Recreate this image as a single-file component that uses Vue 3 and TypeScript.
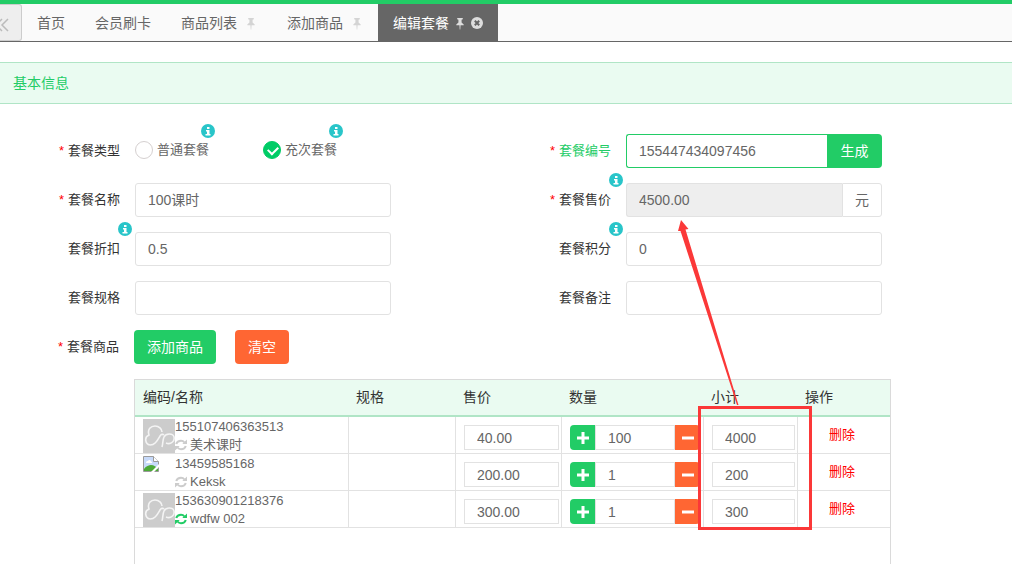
<script setup lang="ts">
import { ref } from 'vue'

interface Tab {
  title: string
  pin: boolean
  active?: boolean
}

interface Item {
  code: string
  name: string
  image: 'default' | 'missing'
  linked: boolean
  price: string
  count: string
  subtotal: string
}

const tabs: Tab[] = [
  { title: '首页', pin: false },
  { title: '会员刷卡', pin: false },
  { title: '商品列表', pin: true },
  { title: '添加商品', pin: true },
  { title: '编辑套餐', pin: true, active: true },
]

const kind = ref('times')
const serial = ref('155447434097456')
const title = ref('100课时')
const price = ref('4500.00')
const discount = ref('0.5')
const points = ref('0')
const spec = ref('')
const remark = ref('')

const items = ref<Item[]>([
  { code: '155107406363513', name: '美术课时', image: 'default', linked: false, price: '40.00', count: '100', subtotal: '4000' },
  { code: '13459585168', name: 'Keksk', image: 'missing', linked: false, price: '200.00', count: '1', subtotal: '200' },
  { code: '153630901218376', name: 'wdfw 002', image: 'default', linked: true, price: '300.00', count: '1', subtotal: '300' },
])
</script>

<template>
  <div class="page">
    <nav class="tabs">
      <button class="scroll" type="button" aria-label="向左">
        <svg width="14" height="16" viewBox="0 0 14 16"><path d="M7 2 1 8l6 6M13 2 7 8l6 6" /></svg>
      </button>
      <button v-for="t in tabs" :key="t.title" type="button" class="tab" :class="{ active: t.active }">
        <span>{{ t.title }}</span>
        <svg v-if="t.pin" class="pin" viewBox="0 0 10 14">
          <path d="M2 1h6v1.500L6.700 3v3L9 8v1H5.600L5.300 13.500h-.6L4.400 9H1V8l2.300-2V3L2 2.500z" />
        </svg>
        <svg v-if="t.active" class="close" viewBox="0 0 12 12">
          <circle cx="6" cy="6" r="6" />
          <path d="m3.800 3.800 4.400 4.400m0-4.400-4.400 4.400" />
        </svg>
      </button>
    </nav>

    <h2 class="heading">基本信息</h2>

    <form class="form" @submit.prevent>
      <div class="fields">
        <div class="field">
          <span id="kind-label" class="label"><i>*</i>套餐类型</span>
          <div class="control radios" role="radiogroup" aria-labelledby="kind-label">
            <label class="radio">
              <input v-model="kind" type="radio" name="kind" value="normal" />
              <span>普通套餐</span>
              <svg class="info" viewBox="0 0 14 14"><circle cx="7" cy="7" r="7" /><path d="M6 3h2.500v2H6zM5 6h3.500v4H9.500v1.500H4.500V10H6V7.500H5z" /></svg>
            </label>
            <label class="radio">
              <input v-model="kind" type="radio" name="kind" value="times" />
              <span>充次套餐</span>
              <svg class="info" viewBox="0 0 14 14"><circle cx="7" cy="7" r="7" /><path d="M6 3h2.500v2H6zM5 6h3.500v4H9.500v1.500H4.500V10H6V7.500H5z" /></svg>
            </label>
          </div>
        </div>

        <div class="field">
          <label class="label focus" for="serial"><i>*</i>套餐编号</label>
          <div class="control">
            <input id="serial" v-model="serial" class="text focus joined" type="text" />
            <button type="button" class="generate">生成</button>
          </div>
        </div>

        <div class="field">
          <label class="label" for="title"><i>*</i>套餐名称</label>
          <div class="control"><input id="title" v-model="title" class="text" type="text" /></div>
        </div>

        <div class="field">
          <label class="label" for="price"><i>*</i>套餐售价
            <svg class="info" viewBox="0 0 14 14"><circle cx="7" cy="7" r="7" /><path d="M6 3h2.500v2H6zM5 6h3.500v4H9.500v1.500H4.500V10H6V7.500H5z" /></svg>
          </label>
          <div class="control">
            <input id="price" v-model="price" class="text joined" type="text" readonly />
            <span class="unit">元</span>
          </div>
        </div>

        <div class="field">
          <label class="label" for="discount">套餐折扣
            <svg class="info" viewBox="0 0 14 14"><circle cx="7" cy="7" r="7" /><path d="M6 3h2.500v2H6zM5 6h3.500v4H9.500v1.500H4.500V10H6V7.500H5z" /></svg>
          </label>
          <div class="control"><input id="discount" v-model="discount" class="text" type="text" /></div>
        </div>

        <div class="field">
          <label class="label" for="points">套餐积分
            <svg class="info" viewBox="0 0 14 14"><circle cx="7" cy="7" r="7" /><path d="M6 3h2.500v2H6zM5 6h3.500v4H9.500v1.500H4.500V10H6V7.500H5z" /></svg>
          </label>
          <div class="control"><input id="points" v-model="points" class="text" type="text" /></div>
        </div>

        <div class="field">
          <label class="label" for="spec">套餐规格</label>
          <div class="control"><input id="spec" v-model="spec" class="text" type="text" /></div>
        </div>

        <div class="field">
          <label class="label" for="remark">套餐备注</label>
          <div class="control"><input id="remark" v-model="remark" class="text" type="text" /></div>
        </div>
      </div>

      <div class="goods">
        <span class="label"><i>*</i>套餐商品</span>
        <div class="actions">
          <button type="button" class="btn">添加商品</button>
          <button type="button" class="btn warn">清空</button>
        </div>
      </div>

      <div class="list">
        <table>
          <colgroup>
            <col class="c-name" /><col class="c-spec" /><col class="c-price" />
            <col class="c-count" /><col class="c-sub" /><col />
          </colgroup>
          <thead>
            <tr>
              <th>编码/名称</th><th>规格</th><th>售价</th><th>数量</th><th>小计</th><th>操作</th>
            </tr>
          </thead>
          <tbody>
            <tr v-for="(it, n) in items" :key="it.code">
              <td>
                <div class="product">
                  <svg v-if="it.image === 'default'" class="thumb" viewBox="0 0 32 34">
                    <rect width="32" height="34" />
                    <path d="M7 26C2 25 1 18 6 16 4 10 8 7 12 7c4 0 7 3 7 6M7 26c5 0 7-4 10-9 1-2 3-2 4-1M19 28c1-3 .5-7 2-10 2-4 9-4 10 0s-3 8-8 6" />
                  </svg>
                  <span v-else class="broken">
                    <svg width="16" height="16" viewBox="0 0 16 16">
                      <path d="M.5.5h10l5 5v10H.5z" fill="#c7dafa" stroke="#9a9a9a" />
                      <path d="M10.500.5v5h5" fill="#fff" stroke="#9a9a9a" />
                      <path d="M3 7c0-2 1.500-2 2-2 .5-1.500 3-1 3 .5 1.500 0 1.500 1.500.5 1.500z" fill="#fff" />
                      <path d="M1 15v-2c2-3 5-4 7-4 3 0 5 2 7 4v2z" fill="#4caa37" />
                      <path d="m8 16 8-8v3l-5 5z" fill="#fff" />
                    </svg>
                  </span>
                  <div class="about">
                    <span>{{ it.code }}</span>
                    <span class="name">
                      <svg class="sync" :class="{ on: it.linked }" viewBox="0 0 12 12">
                        <path d="M1.200 5C2 2.700 4 1.800 6 1.800c1.600 0 2.700.7 3.500 1.700M10.800 7C10 9.300 8 10.200 6 10.200c-1.600 0-2.700-.7-3.500-1.700" />
                        <path class="tip" d="M12 .5V5H7.300zM0 11.500V7h4.700z" />
                      </svg>
                      {{ it.name }}
                    </span>
                  </div>
                </div>
              </td>
              <td></td>
              <td class="entry"><input v-model="it.price" type="text" :aria-label="'售价 ' + (n + 1)" /></td>
              <td class="entry count">
                <div class="stepper">
                  <button type="button" class="plus" aria-label="增加"><svg viewBox="0 0 12 12"><path d="M6 0v12M0 6h12" /></svg></button>
                  <input v-model="it.count" type="text" :aria-label="'数量 ' + (n + 1)" />
                  <button type="button" class="minus" aria-label="减少"><svg viewBox="0 0 12 12"><path d="M0 6h12" /></svg></button>
                </div>
              </td>
              <td class="entry"><input v-model="it.subtotal" type="text" :aria-label="'小计 ' + (n + 1)" /></td>
              <td class="remove"><a href="#">删除</a></td>
            </tr>
          </tbody>
        </table>
        <div class="mark"></div>
        <svg class="arrow" width="64" height="188" viewBox="0 0 64 188">
          <path d="M60 186 3.500 12 1 12 4 1 11.500 10 8.500 10.500 61.500 186z" />
        </svg>
      </div>
    </form>
  </div>
</template>

<style>
body {
  margin: 0;
}
</style>

<style scoped>
* {
  box-sizing: border-box;
}
.page {
  display: flex;
  flex-direction: column;
  min-height: 100vh;
  background: #fff;
  color: #666;
  font: 14px/20px "Liberation Sans", "Noto Sans CJK SC", sans-serif;
}
button,
input {
  margin: 0;
  font: inherit;
  color: inherit;
  outline: 0;
}
button {
  padding: 0;
  border: 0;
  cursor: pointer;
}
.tabs {
  display: flex;
  height: 42px;
  border-top: 4px solid #22cc66;
  border-bottom: 1px solid #666;
  background: #fafafa;
}
.scroll {
  display: flex;
  align-items: center;
  width: 22px;
  border: 1px solid #ccc;
  border-left: 0;
  border-radius: 0 3px 3px 0;
  background: #eee;
}
.scroll svg {
  margin-left: -5px;
  margin-top: 4px;
  fill: none;
  stroke: #bbb;
  stroke-width: 1.5;
}
.tab {
  display: flex;
  align-items: center;
  padding: 0 15px;
  background: none;
}
.pin {
  width: 12px;
  height: 13px;
  margin-top: 2px;
  margin-left: 8px;
  fill: #d4d4d4;
}
.tab.active {
  background: #666;
  color: #fff;
}
.active .pin {
  width: 10px;
  margin-left: 6px;
  fill: #ddd;
}
.close {
  width: 12px;
  height: 12px;
  margin-left: 6px;
  fill: #ddd;
  stroke-width: 2;
}
.close path {
  stroke: #666;
}
.heading {
  margin: 20px 0 30px;
  padding: 10px 13px;
  border: solid #b0e5c6;
  border-width: 1px 0;
  background: #eafbf1;
  color: #22cc66;
  font-size: 14px;
  font-weight: 400;
}
.form {
  display: flex;
  flex: 1;
  flex-direction: column;
  gap: 15px;
}
.fields {
  display: grid;
  grid-template-columns: repeat(2, minmax(0, 1fr));
  row-gap: 15px;
  padding-right: 30px;
}
.field {
  display: grid;
  grid-template-columns: 120px minmax(0, 1fr);
  column-gap: 15px;
  padding-right: 100px;
}
.label {
  position: relative;
  justify-self: end;
  color: #333;
  font-size: 13px;
  line-height: 34px;
}
.label i {
  margin-right: 4px;
  color: #f00;
  font-style: normal;
}
.label.focus {
  color: #22cc66;
}
.control {
  display: flex;
  height: 34px;
}
.text {
  flex: 1;
  min-width: 0;
  padding: 0 12px;
  border: 1px solid #e2e2e2;
  border-radius: 3px;
  background: #fff;
}
.text[readonly] {
  background: #eee;
}
.text.focus {
  border-color: #22cc66;
}
.text.joined {
  border-right: 0;
  border-radius: 3px 0 0 3px;
}
.generate {
  width: 55px;
  border-radius: 0 4px 4px 0;
  background: #22cc66;
  color: #fff;
}
.unit {
  width: 40px;
  border: 1px solid #e2e2e2;
  border-radius: 0 3px 3px 0;
  line-height: 32px;
  text-align: center;
}
.radios {
  gap: 54px;
}
.radio {
  position: relative;
  display: flex;
  align-items: center;
  gap: 4px;
  height: 32px;
  font-size: 13px;
  white-space: nowrap;
}
.radio input {
  position: relative;
  width: 18px;
  height: 18px;
  border: 1px solid #d5d0d0;
  border-radius: 50%;
  appearance: none;
}
.radio input:checked {
  border-color: #00cc66;
  background: #00cc66;
}
.radio input:checked::after {
  position: absolute;
  top: 4px;
  left: 4px;
  width: 8px;
  height: 5px;
  border: solid #fff;
  border-width: 0 0 2px 2px;
  content: "";
  transform: rotate(-45deg);
}
.info {
  position: absolute;
  top: -10px;
  right: -12px;
  width: 14px;
  height: 14px;
  fill: #29c5c9;
}
.info path {
  fill: #fff;
}
.radio .info {
  right: -6px;
}
.goods {
  display: grid;
  grid-template-columns: 119px 1fr;
  column-gap: 15px;
}
.actions {
  display: flex;
  gap: 19px;
}
.btn {
  height: 34px;
  padding: 0 13px;
  border-radius: 4px;
  background: #22cc66;
  color: #fff;
}
.btn.warn {
  background: #ff6633;
}
.list {
  position: relative;
  flex: 1;
  margin: 0 121px 0 134px;
  border: solid #dadada;
  border-width: 1px 1px 0;
}
table {
  width: 100%;
  border-spacing: 0;
  table-layout: fixed;
}
.c-name {
  width: 214px;
}
.c-spec {
  width: 107px;
}
.c-price {
  width: 106px;
}
.c-count {
  width: 142px;
}
.c-sub {
  width: 94px;
}
th {
  height: 37px;
  padding: 0 7px 2px;
  border-bottom: 2px solid #b0e5c6;
  background: #eafbf1;
  color: #333;
  font-weight: 400;
  text-align: left;
}
th:first-child {
  padding-left: 8px;
}
td {
  height: 37px;
  padding: 0 0 0 8px;
  border: solid #e2e2e2;
  border-width: 0 1px 1px 0;
}
td:last-child {
  border-right: 0;
}
.product {
  display: flex;
  height: 36px;
  overflow: hidden;
  font-size: 13px;
  line-height: 18px;
}
.thumb {
  width: 32px;
  height: 34px;
  margin-top: 2px;
  fill: #ccc;
}
.thumb path {
  fill: none;
  stroke: #f4f4f4;
  stroke-width: 1.6;
}
.broken {
  width: 32px;
  padding-top: 2px;
}
.about {
  display: flex;
  flex-direction: column;
  padding-top: 1px;
}
.name {
  display: flex;
  align-items: center;
  gap: 3px;
}
.sync {
  width: 12px;
  height: 12px;
  fill: none;
  stroke: #ccc;
  stroke-width: 2;
}
.sync .tip {
  fill: #ccc;
  stroke: none;
}
.sync.on {
  stroke: #22cc66;
}
.sync.on .tip {
  fill: #22cc66;
}
.entry {
  padding: 8px 2px 3px 8px;
  line-height: 0;
}
.entry input {
  width: 100%;
  height: 25px;
  padding: 0 12px;
  border: 1px solid #e2e2e2;
  background: #fff;
  line-height: 20px;
}
.entry.count {
  padding-right: 3px;
}
.stepper {
  display: flex;
}
.stepper input {
  flex: 1;
  min-width: 0;
}
.stepper button {
  flex: none;
  width: 25px;
  height: 25px;
}
.stepper svg {
  width: 12px;
  height: 12px;
  stroke: #fff;
  stroke-width: 3;
}
.plus {
  border-radius: 4px 0 0 4px;
  background: #22cc66;
}
.minus {
  border-radius: 0 4px 4px 0;
  background: #ff6633;
}
.remove {
  padding: 0 4px 0 0;
  font-size: 13px;
  text-align: center;
}
a {
  color: #f00;
  text-decoration: none;
}
.mark {
  position: absolute;
  top: 26px;
  left: 563px;
  width: 114px;
  height: 124px;
  border: 3px solid #fb3838;
}
.arrow {
  position: absolute;
  top: -161px;
  left: 542px;
  fill: #fb3838;
}
</style>
